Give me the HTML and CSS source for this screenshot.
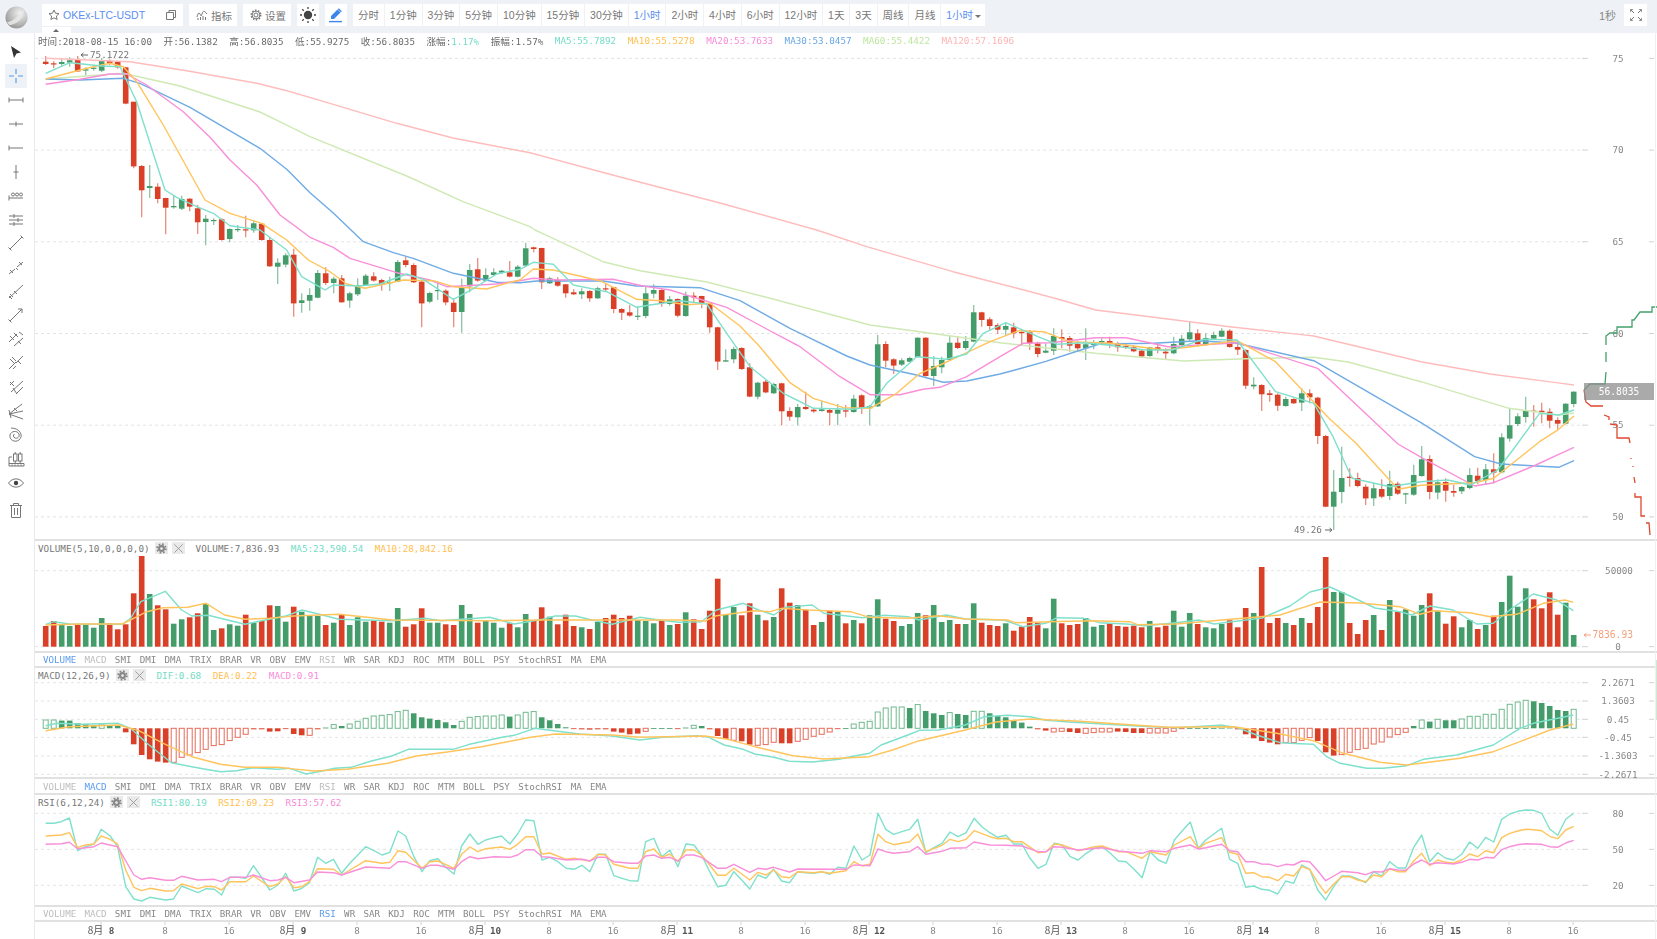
FILE: index.html
```html
<!DOCTYPE html>
<html lang="zh-CN">
<head>
<meta charset="utf-8">
<title>OKEx-LTC-USDT</title>
<link rel="stylesheet" href="styles.css">
</head>
<body>
<div class="app">
  <header class="toolbar">
    <div class="logo-slot">
      <svg class="logo" viewBox="0 0 24 24" width="23" height="23">
        <defs>
          <radialGradient id="sphere" cx="65%" cy="30%" r="80%">
            <stop offset="0" stop-color="#f1f1f1"/>
            <stop offset=".55" stop-color="#bdbdbd"/>
            <stop offset="1" stop-color="#8f8f8f"/>
          </radialGradient>
        </defs>
        <circle cx="12" cy="12" r="11.5" fill="url(#sphere)"/>
        <path d="M2 17C8 16 16 10 19 3C21 9 16 18 5 20Z" fill="#e9e9e9" opacity=".85"/>
      </svg>
    </div>
    <div class="btn symbol">
      <svg class="ico" viewBox="0 0 12 12" width="12" height="12"><path class="ln" d="M6 1l1.5 3.2 3.5.4-2.6 2.4.7 3.5L6 8.8l-3.1 1.7.7-3.5L1 4.6l3.5-.4z"/></svg>
      <span class="symbol-name">OKEx-LTC-USDT</span>
      <svg class="ico copy" viewBox="0 0 12 12" width="12" height="12"><path class="ln" d="M1.5 3.5h7v7h-7zM4 3.5V1.5h6.500v7H8.500"/></svg>
    </div>
    <div class="btn action">
      <svg class="ico" viewBox="0 0 12 12" width="12" height="12"><path class="ln" d="M1 8c1-4 2-5 3-3s1 3 2 0 2-4 5 0M2 11V9M4.500 11V8M7 11V7M9.500 11V8"/></svg>
      <span>指标</span>
    </div>
    <div class="btn action">
      <svg class="ico" viewBox="0 0 12 12" width="12" height="12"><circle class="ln" cx="6" cy="6" r="2"/><circle class="ln dash" cx="6" cy="6" r="4.800"/><circle class="ln" cx="6" cy="6" r="3.900"/></svg>
      <span>设置</span>
    </div>
    <div class="btn square">
      <svg viewBox="0 0 16 16" width="16" height="16"><circle cx="8" cy="8" r="4.200" fill="#444"/><path class="rays" d="M8 0v2M8 14v2M0 8h2M14 8h2M2.300 2.300l1.400 1.400M12.300 12.300l1.400 1.400M2.300 13.700l1.400-1.400M12.300 3.700l1.400-1.400"/></svg>
    </div>
    <div class="btn square">
      <svg viewBox="0 0 16 16" width="16" height="16"><path d="M9.500 2.500l3 3L6 12H3V9z" fill="#3f86ea"/><path d="M10.800 1.200l3 3-1 1-3-3z" fill="#3f86ea"/><path d="M1 14.600h13" stroke="#3f86ea" stroke-width="1.400"/></svg>
    </div>
    <nav class="periods">
      <span class="period">分时</span>
      <span class="period">1分钟</span>
      <span class="period">3分钟</span>
      <span class="period">5分钟</span>
      <span class="period">10分钟</span>
      <span class="period">15分钟</span>
      <span class="period">30分钟</span>
      <span class="period active">1小时</span>
      <span class="period">2小时</span>
      <span class="period">4小时</span>
      <span class="period">6小时</span>
      <span class="period">12小时</span>
      <span class="period">1天</span>
      <span class="period">3天</span>
      <span class="period">周线</span>
      <span class="period">月线</span>
      <span class="period active more">1小时<i class="caret"></i></span>
    </nav>
    <div class="toolbar-right">
      <span class="refresh">1秒</span>
      <div class="btn full">
        <svg viewBox="0 0 14 14" width="14" height="14"><path class="full-ico" d="M1 1h3.500L1 4.500zM13 1H9.500L13 4.500zM1 13h3.500L1 9.500zM13 13H9.500L13 9.500z"/><path class="ln" d="M2 2l3 3M12 2L9 5M2 12l3-3M12 12L9 9"/></svg>
      </div>
    </div>
    <div class="collapse"></div>
  </header>

  <div class="workspace">
    <aside class="tools">
      <div class="tool"><svg viewBox="0 0 22 22"><path d="M6 5l10 6.500-4.500 1L9 17z" fill="#333"/></svg></div>
      <div class="tool selected"><svg viewBox="0 0 22 22"><path class="blue" d="M4 11h5M13 11h5M11 4v5M11 13v5"/></svg></div>
      <div class="tool"><svg viewBox="0 0 22 22"><path class="ln" d="M4 11h14M4 8.500v5M18 8.500v5"/></svg></div>
      <div class="tool"><svg viewBox="0 0 22 22"><path class="ln" d="M4 11h14M11 8.500v5"/></svg></div>
      <div class="tool"><svg viewBox="0 0 22 22"><path class="ln" d="M4 11h14M4 8.500v5"/></svg></div>
      <div class="tool"><svg viewBox="0 0 22 22"><path class="ln" d="M11 4v14M8.500 11h5"/></svg></div>
      <div class="tool"><svg viewBox="0 0 22 22"><path class="ln" d="M4 13h14M4 10.500v5"/><circle class="ln" cx="8" cy="9.500" r="1.500"/><circle class="ln" cx="12" cy="9.500" r="1.500"/><circle class="ln" cx="16" cy="9.500" r="1.500"/></svg></div>
      <div class="tool"><svg viewBox="0 0 22 22"><path class="ln" d="M4 7h14M4 11h14M4 15h14M9 5v4M13 9v4M9 13v4"/></svg></div>
      <div class="tool"><svg viewBox="0 0 22 22"><path class="ln" d="M5 17L17 5M3.500 15.500l3 3M15.500 3.500l3 3"/></svg></div>
      <div class="tool"><svg viewBox="0 0 22 22"><path class="ln" d="M4 18l6-5M12 11l6-5M5 14l3 3M14 6l3 3M11 12l2 2"/></svg></div>
      <div class="tool"><svg viewBox="0 0 22 22"><path class="ln" d="M4 18L18 5M5 14l3 3M9 11l3 3M4 16l3 3"/></svg></div>
      <div class="tool"><svg viewBox="0 0 22 22"><path class="ln" d="M5 17L17 5M13 5h4v4M3.500 15.500l3 3"/></svg></div>
      <div class="tool"><svg viewBox="0 0 22 22"><path class="ln" d="M4 14l8-8M9 18l9-8M14 4l4 3M5 8l4 4M9 5l4 4M13 13l3 3"/></svg></div>
      <div class="tool"><svg viewBox="0 0 22 22"><path class="ln" d="M4 17l7-7M11 11l7-7M5 7l4 4M7 5l4 4M11 14l-3 3M13 9l3 3"/></svg></div>
      <div class="tool"><svg viewBox="0 0 22 22"><path class="ln" d="M5 9l4-4M9 10l-4-4M6 16l12-11M8 12l4 6M11 18l7-7"/></svg></div>
      <div class="tool"><svg viewBox="0 0 22 22"><path class="ln" d="M4 14L17 4M4 14l14-3M4 14l14 5M9 8l3 3M4 10l2 8"/></svg></div>
      <div class="tool"><svg viewBox="0 0 22 22"><path class="ln" d="M6 4c9 0 13 8 8 12-4 3-10 0-9-5 1-4 7-5 9-1 1 3-2 5-4 4-2-1-2-3-.5-4"/></svg></div>
      <div class="tool"><svg viewBox="0 0 22 22"><path class="ln" d="M4 18V9h3M4 18h15v-2.500H4M7 18v-1.500M10 18v-1.500M13 18v-1.500M16 18v-1.500"/><rect class="ln" x="8.500" y="6" width="3.500" height="7"/><rect class="ln" x="13.500" y="6" width="3.500" height="7"/><path class="ln" d="M10.200 4v2M15.200 4v2M10.200 13v2.500M15.200 13v2.500"/></svg></div>
      <div class="tool"><svg viewBox="0 0 22 22"><path class="ln" d="M3.500 11c4-5.500 11-5.500 15 0-4 5.500-11 5.500-15 0z"/><circle cx="11" cy="11" r="2.200" fill="#444"/></svg></div>
      <div class="tool last"><svg viewBox="0 0 22 22"><path class="ln" d="M5 6.500h12M8.500 6.500V4.500h5v2M6.500 6.500V18.500h9V6.500M9.500 9v7M12.500 9v7"/></svg></div>
    </aside>

    <main class="charts">
      <section class="pane pane-main">
        <div class="info">
          <span><b class="cjk">时间</b>:2018-08-15 16:00</span>
          <span><b class="cjk">开</b>:56.1382</span>
          <span><b class="cjk">高</b>:56.8035</span>
          <span><b class="cjk">低</b>:55.9275</span>
          <span><b class="cjk">收</b>:56.8035</span>
          <span><b class="cjk">涨幅</b>:<em class="c-ma5">1.17%</em></span>
          <span><b class="cjk">振幅</b>:1.57%</span>
          <span class="c-ma5">MA5:55.7892</span>
          <span class="c-ma10">MA10:55.5278</span>
          <span class="c-ma20">MA20:53.7633</span>
          <span class="c-ma30">MA30:53.0457</span>
          <span class="c-ma60">MA60:55.4422</span>
          <span class="c-ma120">MA120:57.1696</span>
        </div>
        <svg id="chart-main" class="plot" viewBox="35 33 1622 506"></svg>
      </section>

      <section class="pane pane-vol">
        <div class="sub-title">
          <span class="sub-name">VOLUME(5,10,0,0,0,0)</span>
          <span class="mini"><svg viewBox="0 0 12 12"><circle class="gear-teeth" cx="6" cy="6" r="4.800"/><circle class="gear" cx="6" cy="6" r="3.800"/><circle class="gear-hole" cx="6" cy="6" r="1.500"/></svg></span>
          <span class="mini"><svg viewBox="0 0 12 12"><path class="x" d="M1.500 1.500l9 9M10.500 1.500l-9 9"/></svg></span>
          <span class="sub-val">VOLUME:7,836.93</span>
          <span class="sub-val c-ma5">MA5:23,590.54</span>
          <span class="sub-val c-ma10">MA10:28,842.16</span>
        </div>
        <svg id="chart-vol" class="plot" viewBox="35 541 1622 110"></svg>
      </section>
      <nav class="tabs tabs-13">
        <span class="on">VOLUME</span><span class="dim">MACD</span><span>SMI</span><span>DMI</span><span>DMA</span><span>TRIX</span><span>BRAR</span><span>VR</span><span>OBV</span><span>EMV</span><span class="dim">RSI</span><span>WR</span><span>SAR</span><span>KDJ</span><span>ROC</span><span>MTM</span><span>BOLL</span><span>PSY</span><span>StochRSI</span><span>MA</span><span>EMA</span>
      </nav>

      <section class="pane pane-macd">
        <div class="sub-title">
          <span class="sub-name">MACD(12,26,9)</span>
          <span class="mini"><svg viewBox="0 0 12 12"><circle class="gear-teeth" cx="6" cy="6" r="4.800"/><circle class="gear" cx="6" cy="6" r="3.800"/><circle class="gear-hole" cx="6" cy="6" r="1.500"/></svg></span>
          <span class="mini"><svg viewBox="0 0 12 12"><path class="x" d="M1.500 1.500l9 9M10.500 1.500l-9 9"/></svg></span>
          <span class="sub-val c-ma5">DIF:0.68</span>
          <span class="sub-val c-ma10">DEA:0.22</span>
          <span class="sub-val c-ma20">MACD:0.91</span>
        </div>
        <svg id="chart-macd" class="plot" viewBox="35 668 1622 109"></svg>
      </section>
      <nav class="tabs tabs-14">
        <span class="dim">VOLUME</span><span class="on">MACD</span><span>SMI</span><span>DMI</span><span>DMA</span><span>TRIX</span><span>BRAR</span><span>VR</span><span>OBV</span><span>EMV</span><span class="dim">RSI</span><span>WR</span><span>SAR</span><span>KDJ</span><span>ROC</span><span>MTM</span><span>BOLL</span><span>PSY</span><span>StochRSI</span><span>MA</span><span>EMA</span>
      </nav>

      <section class="pane pane-rsi">
        <div class="sub-title">
          <span class="sub-name">RSI(6,12,24)</span>
          <span class="mini"><svg viewBox="0 0 12 12"><circle class="gear-teeth" cx="6" cy="6" r="4.800"/><circle class="gear" cx="6" cy="6" r="3.800"/><circle class="gear-hole" cx="6" cy="6" r="1.500"/></svg></span>
          <span class="mini"><svg viewBox="0 0 12 12"><path class="x" d="M1.500 1.500l9 9M10.500 1.500l-9 9"/></svg></span>
          <span class="sub-val c-ma5">RSI1:80.19</span>
          <span class="sub-val c-ma10">RSI2:69.23</span>
          <span class="sub-val c-ma20">RSI3:57.62</span>
        </div>
        <svg id="chart-rsi" class="plot" viewBox="35 795 1622 110"></svg>
      </section>
      <nav class="tabs tabs-13">
        <span class="dim">VOLUME</span><span class="dim">MACD</span><span>SMI</span><span>DMI</span><span>DMA</span><span>TRIX</span><span>BRAR</span><span>VR</span><span>OBV</span><span>EMV</span><span class="on">RSI</span><span>WR</span><span>SAR</span><span>KDJ</span><span>ROC</span><span>MTM</span><span>BOLL</span><span>PSY</span><span>StochRSI</span><span>MA</span><span>EMA</span>
      </nav>

      <svg id="chart-time" class="time-axis" viewBox="35 922 1622 17"></svg>
      <div class="scroll-thumb"></div>
    </main>
  </div>
</div>
<script src="chart.js"></script>
</body>
</html>
```
FILE: styles.css
```css
* { box-sizing: border-box; }
html, body { margin: 0; height: 100%; background: #fff; overflow: hidden; }
body { font-family: "Liberation Sans", "Noto Sans CJK SC", sans-serif; color: #777; }
.app { width: 1657px; height: 939px; display: flex; flex-direction: column; filter: blur(.35px); }

/* top bar */
.toolbar { position: relative; height: 33px; flex: none; display: flex; align-items: center; gap: 6px; background: #eef1f5; font-size: 10.500px; padding: 0 10px 3px 0; }
.logo-slot { width: 36px; height: 33px; display: flex; align-items: center; padding: 2px 0 0 5px; flex: none; align-self: flex-start; }
.logo { display: block; }
.btn { height: 22px; background: #fff; display: flex; align-items: center; flex: none; }
.symbol { width: 141px; padding: 0 6px; gap: 3px; }
.symbol-name { color: #5b8ff0; font-size: 10.500px; }
.copy { margin-left: auto; }
.action { width: 48px; gap: 3px; padding-left: 7px; }
.square { width: 22px; justify-content: center; }
.ico { flex: none; }
.ln { fill: none; stroke: #777; stroke-width: 1; }
.ln.dash { stroke-dasharray: 1.500 1.500; stroke-width: 1.400; }
.rays { stroke: #444; stroke-width: 1.300; fill: none; }
.periods { display: flex; gap: 1px; }
.period { height: 22px; line-height: 22px; padding: 0 4.950px; background: #fff; color: #777; white-space: nowrap; }
.period.active { color: #5b8ff0; }
.more { padding-right: 4px; }
.caret { display: inline-block; margin-left: 2px; vertical-align: 1px; border: 3px solid transparent; border-top-color: #777; border-bottom-width: 0; }
.toolbar-right { margin-left: auto; display: flex; align-items: center; gap: 8px; font-size: 11px; }
.refresh { color: #888; }
.full { width: 23px; justify-content: center; }
.full-ico { fill: #999; }
.collapse { position: absolute; left: 42px; top: 27px; width: 29px; height: 6px; background: #fff; }
.collapse::after { content: ""; position: absolute; left: 11px; top: 2px; border: 3px solid transparent; border-bottom-color: #666; border-top-width: 0; }

/* left tool rail */
.workspace { flex: 1; display: flex; min-height: 0; }
.tools { width: 35px; flex: none; border-right: 1px solid #e7eaee; padding: 7px 0 0 5px; display: flex; flex-direction: column; background: #fff; }
.tool { width: 22px; height: 23.950px; flex: none; display: flex; align-items: center; justify-content: center; }
.tool.last { margin-top: 3px; }
.tool svg { width: 22px; height: 22px; display: block; }
.tool.selected { background: #eef1f5; border-radius: 2px; }
.blue { fill: none; stroke: #5b9be8; stroke-width: 1.200; }

/* chart column */
.charts { position: relative; width: 1622px; flex: none; display: flex; flex-direction: column; }
.pane { position: relative; flex: none; border-bottom: 2px solid #e1e1e1; }
.pane-main { height: 508px; }
.pane-vol { height: 112px; }
.pane-macd { height: 111px; }
.pane-rsi { height: 112px; }
.plot { display: block; width: 1622px; height: 100%; overflow: visible; }
.info { position: absolute; left: 3px; top: 0; height: 15px; display: flex; align-items: center; gap: 11.500px; white-space: nowrap; font: 9.270px "DejaVu Sans Mono", monospace; color: #6a6a6a; background: #fff; z-index: 1; }
.info em { font-style: normal; }
.cjk { font: 9.600px "Noto Sans CJK SC", sans-serif; }
.c-ma5 { color: #74dcc6; }
.c-ma10 { color: #ffc04f; }
.c-ma20 { color: #f98bd8; }
.c-ma30 { color: #6aa8e4; }
.c-ma60 { color: #bfe6a0; }
.c-ma120 { color: #ffb4b4; }

.sub-title { position: absolute; left: 0; top: 0; height: 14px; padding: 0 0 0 3px; display: flex; align-items: center; white-space: nowrap; font: 9.270px "DejaVu Sans Mono", monospace; background: #fff; z-index: 1; }
.sub-name { color: #777; margin-right: 5px; }
.mini { width: 13px; height: 12px; background: #eaeaea; margin-right: 4px; display: flex; align-items: center; justify-content: center; }
.mini svg { width: 11px; height: 11px; display: block; }
.mini + .sub-val { margin-left: 7px; }
.sub-val { color: #777; margin-right: 11.500px; }
.sub-val.c-ma5 { color: #74dcc6; }
.sub-val.c-ma10 { color: #ffc04f; }
.sub-val.c-ma20 { color: #f98bd8; }
.gear { fill: #868686; }
.gear-hole { fill: #eaeaea; }
.gear-teeth { fill: none; stroke: #868686; stroke-width: 1.800; stroke-dasharray: 1.900 1.870; }
.x { stroke: #999; stroke-width: 1; fill: none; }

.tabs { flex: none; display: flex; align-items: center; gap: 8.250px; padding-left: 8px; font: 9.200px "DejaVu Sans Mono", monospace; color: #888; border-bottom: 2px solid #e1e1e1; }
.tabs-13 { height: 15px; padding-bottom: 1px; }
.tabs-14 { height: 16px; }
.tabs .on { color: #5b9bf0; }
.tabs .dim { color: #bdbdbd; }
.time-axis { display: block; width: 1622px; height: 17px; flex: none; }
.scroll-thumb { position: absolute; right: 0; top: 627px; width: 2px; height: 60px; background: #cfe9d9; }
.charts::after { content: ""; position: absolute; right: 1px; top: 0; bottom: 0; width: 1px; background: #eef0f3; }

/* svg chart marks */
.grid { stroke: #e4e4e4; stroke-width: 1; stroke-dasharray: 3 3; fill: none; }
.tick { stroke: #d2d2d2; stroke-width: 1; fill: none; }
.label { font: 9.270px "DejaVu Sans Mono", monospace; fill: #888; text-anchor: middle; }
.label-cjk { font: 10px "Noto Sans CJK SC", sans-serif; }
.date { fill: #555; font-weight: bold; }
.up { fill: #439c69; }
.down { fill: #da3f27; }
.wick-up { stroke: #439c69; stroke-width: 1.300; opacity: .6; }
.wick-down { stroke: #da3f27; stroke-width: 1.300; opacity: .6; }
.hollow-up { fill: #fff; stroke: #6fb98e; stroke-width: 1; }
.hollow-down { fill: #fff; stroke: #e66b57; stroke-width: 1; }
.line { fill: none; stroke-width: 1.400; stroke-linejoin: round; }
.l-ma5 { stroke: #7fe0cc; }
.l-ma10 { stroke: #ffc45c; }
.l-ma20 { stroke: #f98fd9; }
.l-ma30 { stroke: #6fabe4; }
.l-ma60 { stroke: #cfe9b4; }
.l-ma120 { stroke: #ffbcbc; }
.depth-red { fill: none; stroke: #e0472e; stroke-width: 1.300; }
.depth-green { fill: none; stroke: #46a06c; stroke-width: 1.300; }
.price-tag { fill: #8e8e8e; opacity: .75; }
.price-text { font: 9.600px "DejaVu Sans Mono", monospace; fill: #fff; text-anchor: middle; }
.mark { font: 9.270px "DejaVu Sans Mono", monospace; fill: #777; }
.mark-vol { font: 9.600px "DejaVu Sans Mono", monospace; fill: #f4a07c; }
.arrow-ln { fill: none; stroke: #666; stroke-width: 1; }
.arrow-vol { fill: none; stroke: #f4a07c; stroke-width: 1; }
```
FILE: chart.js
```js
// Price, volume and indicator series, read as pixel positions on each pane.
const X0 = 45.7, STEP = 8;
const xOf = i => X0 + STEP * i;

function pts(s, ox = 0, sx = 1, oy = 0, sy = 1) {
  return s.trim().split(/\s+/).map(p => {
    const [a, b] = p.split(',').map(Number);
    return [ox + a / sx, oy + b / sy];
  });
}
const Z5 = [0, 2.45, 530, 3], Z7 = [0, 2.45, 660, 3], Z12 = [640, 2.613, 550, 3], Z8 = [1200, 3, 660, 3], Z6 = [1400, 3, 370, 3];
const from = (s, z) => pts(s, z[0], z[1], z[2], z[3]);
const poly = (p, cls) => `<polyline class="line ${cls}" points="${p.map(q => q[0].toFixed(1) + ',' + q[1].toFixed(1)).join(' ')}"/>`;
function stitch(...parts) {
  // parts: [points, xmin, xmax]
  let out = [];
  parts.forEach(([p, a, b]) => { out = out.concat(p.filter(q => q[0] > a && q[0] <= b)); });
  return out;
}
function grid(ys) {
  return ys.map(y => `<path class="grid" d="M35 ${y}H1582"/><path class="tick" d="M1582 ${y}H1588M1649 ${y}H1654"/>`).join('');
}
const label = (x, y, t, c = 'label') => `<text class="${c}" x="${x}" y="${y + 3.2}">${t}</text>`;
const arrowLeft = (x, y, c = 'arrow-ln') => `<path class="${c}" d="M${x + 7} ${y}H${x}M${x + 2.5} ${y - 2}L${x} ${y}L${x + 2.5} ${y + 2}"/>`;
const arrowRight = (x, y, c = 'arrow-ln') => `<path class="${c}" d="M${x} ${y}H${x + 7}M${x + 4.5} ${y - 2}L${x + 7} ${y}L${x + 4.5} ${y + 2}"/>`;

/* ---------- candles: wick top, body top, body bottom, wick bottom ---------- */
const C1 = `R18,35,42,45 R34,40,41,55 G25,36,42,48 G22,31,38,50 R18,29,64,66 G52,58,62,76 G45,53,56,62 G25,33,62,66 R28,33,39,45 R33,36,52,56
R50,52,161,163 R155,155,349,355 R345,348,421,502 G345,408,414,444 R400,410,447,460 R443,444,473,553 G438,468,472,476 G437,447,476,480 R445,446,470,484 R465,475,517,552
G495,506,516,586 G505,510,512,525 R505,508,570,572 G535,537,567,577 G525,537,539,546 R497,538,541,562 G510,520,541,548 R519,521,570,572 R560,570,649,651 G625,638,650,702
G610,616,644,652 R596,614,760,800 G730,751,759,788 G715,735,752,782 G660,669,743,745 R652,670,699,705 G680,686,699,730 R675,685,757,758 G725,730,752,773 G685,706,733,738
G672,677,705,708 R667,679,692,695 R686,690,703,722 G680,696,700,723 G630,636,695,697 R620,631,645,652 R640,645,697,699 R692,695,760,832 G725,729,755,760 G695,720,722,750
R718,722,757,766 R745,758,786,832 G686,712,786,848 G642,660,709,727 R624,658,692,695 G655,675,692,695 G655,667,675,678 G660,662,668,672 R633,667,680,682 G645,650,680,682 G578,595,647,650`;
const C2 = `R50,52,57,67 R53,54,157,177 G140,145,160,162 R142,150,167,170 R162,163,190,203 R178,187,193,195 G175,184,193,207 R180,183,205,215 G170,175,205,207
R160,175,177,185 R170,172,237,250 R235,237,248,270 R225,247,257,260 G230,257,260,270 G170,190,258,265 G163,180,191,205 R178,180,220,230 G198,208,222,227 R205,207,257,262
G185,197,258,260 R187,197,202,218 R197,198,222,235 R218,220,292,308 R290,292,395,420 G358,391,395,396 G350,357,388,400 R352,354,417,420 R400,412,500,502 G455,458,500,508
R450,455,487,490 G458,462,490,492 R458,460,544,586 R532,543,560,572 G522,531,562,586 R485,531,537,540 R533,539,544,548 G513,538,543,545 R535,540,548,586 G522,539,551,586
R525,541,545,562 G494,506,546,548 R493,496,534,552 G525,529,535,586 G315,343,529,531 R334,342,392,412 R385,388,407,432 G385,391,404,408 G380,384,395,397 G322,323,381,383
R322,323,438,440 G378,408,438,468 G380,390,412,430 G318,338,390,392 R322,338,354,357 G318,333,354,360 G225,247,335,337 R245,247,270,290 R262,268,288,302 R280,285,299,312
G280,288,299,315 R278,292,310,325`;
const C3 = `R90,96,98,138 R90,97,130,150 R125,130,162,172 G130,152,158,160 G85,108,152,165 R88,111,117,145 R108,114,137,155 R122,132,145,155 G85,133,145,180
G120,127,135,148 G115,123,128,135 R110,123,130,145 R125,132,142,155 R130,138,144,147 R135,142,154,157 R150,152,169,173 G140,142,168,170 R130,142,150,160 R145,155,160,177
G110,132,160,163 G105,116,135,137 G64,97,118,122 R88,100,132,140 G100,114,134,138 G95,105,116,118 G85,92,110,112 R88,92,141,143 R125,141,149,165 R148,150,257,267
G232,254,259,268 R253,255,283,333 R270,280,285,305 R280,284,317,333 G290,297,318,320 R295,297,310,312 G265,280,308,333 R268,280,292,310 R290,293,408,432 R405,408,620,622
G510,575,620,690 G440,534,576,610 R505,530,534,560 R518,534,558,562 R553,560,595,615 G550,565,595,618 R538,567,590,595 G512,552,588,600 R545,551,581,585 G578,580,582,612
G494,525,584,587 G438,478,528,530 R466,477,576,598 G538,547,578,598 R535,546,572,605 R555,573,578,590 G558,561,574,582 G505,525,564,568 R503,527,543,552 G492,508,540,555
R460,508,518,550 G400,412,517,520 G325,376,416,425 G340,349,372,378 G290,332,351,368 R315,332,334,380 R308,332,338,370 R325,335,362,385 R352,360,371,388 G310,311,371,373 G274,275,312,322`;
function parseCandles(s, off) {
  return s.trim().split(/\s+/).map(t => {
    const up = t[0] === 'G';
    const [wt, bt, bb, wb] = t.slice(1).split(',').map(n => off + Number(n) / 3);
    return { up, wt, bt, bb, wb };
  });
}
const candles = parseCandles(C1, 50).concat(parseCandles(C2, 230), parseCandles(C3, 300));

/* ---------- moving averages on the price pane ---------- */
const MA = {
  'l-ma120': '45.7,58.3 130,61.7 186.7,70.7 256.7,83.3 286.7,90.7 330,103.3 396.7,123.3 453,138 530,152.7 620,177 720,203 816.7,230 866.7,246.7 953,271.7 1020,289 1061,300 1095.7,310 1229.6,326.7 1313.8,336 1421,361.7 1490,374 1574,385',
  'l-ma60': '45.7,79 123.3,73.3 180,86 260,112 310,136.7 406.7,176 463,201.7 530,226.7 535,230 603,261.7 640,270.7 706.7,282 773,299 870,325 920,331.7 1000,342.7 1095.7,353.3 1183.7,361 1260,358.3 1313.8,357.3 1348,362 1421,381.7 1509,408.3 1558.7,415 1574,413',
  'l-ma30': '45.7,79 80,80 123.3,78.3 140,83.3 190,107.3 260,148.3 286.7,169.3 310,192.7 333,212.7 363.3,241.7 393.3,252.7 413.3,258.3 453.3,273.3 496.7,282.3 520,282.7 536.7,281 603,281 636.7,286 700,287.7 740,300.7 790,328.3 846.7,356 870,365 913.3,374.3 943.3,382.3 966.7,381 1000,374 1015,370 1046,361.3 1099.5,344 1153,343.3 1199,340.7 1237,343.3 1313.8,360.7 1421,422.7 1474.6,456.7 1501,464 1558.7,467.3 1574,460.7',
  'l-ma20': '45.7,84.3 80,79.3 110,74 126.7,74 146.7,85 183.3,111.7 210,137.3 230,160 256.7,185 280,215 310,237.3 333.3,247.3 350,258.3 396.7,272.7 430,280 446.7,286.7 496.7,284 520,280.7 533,278.3 560,280 613,279.3 643,286 670,290 726.7,307.3 766.7,329 800,346.7 840,376.7 870,394.7 900,394.7 923,389.3 940,387.3 966.7,376.7 1000,356.7 1023,343.3 1050,342.7 1095.7,337.7 1126,337.7 1168,346.7 1199,345 1237,342.7 1317.6,368.3 1398,444 1423,458.3 1474.6,486 1493.7,482.7 1535.8,465 1574,447.3',
  'l-ma10': '45.7,79 73.3,71.7 93.3,66.7 110,63.3 123.3,66.7 136.7,81.7 163.3,125 205,200 230,213.3 261.7,223.3 286.7,240 308.3,260 330,271.7 346.7,284 365,288.3 403.3,280 433.3,280.7 453.3,286.7 486.7,289 510,282.3 520,280 533.3,269 553.3,270 600,280.7 636.7,299.3 660,300.7 686.7,304.7 710,303.3 740,326 758.3,345 790,382.7 813.3,398.3 843.3,407.7 870,408.3 896.7,393.3 920,373.3 940,365 956.7,357.3 990,341.7 1019,330.7 1044,331.7 1069,341.7 1111,343.3 1164.6,350 1191,346.7 1237,340.7 1275.5,361.7 1329,418.3 1356,443.3 1398,489.3 1421,485.3 1474.6,482.7 1493.7,478.3 1539.6,441.7 1558.7,429.3 1574,416',
  'l-ma5': '45.7,73.3 70,62.7 101.7,66 120,66.7 136.7,101.7 165,190 176.7,197.3 196.7,206.7 213.3,213.3 230,225.7 260,230 286.7,250 301.7,276.7 325,290 333.3,285 358.3,286 380,284 406.7,274 423.3,279.3 453.3,299.3 470,290.7 496.7,274 520,269.3 533.3,262.3 553.3,264.3 573.3,285 606.7,291.7 636.7,307.3 650,305 680,300.7 706.7,304 726.7,333.3 750,366.7 783.3,393.3 813.3,408.3 853.3,409.3 870,406.7 886.7,383.3 900,371.7 916.7,356.7 946.7,359.3 966.7,354 983.3,333.3 1005.7,322.7 1038,336.7 1057.4,344.3 1084,342.7 1107,345 1145.4,350 1172,350 1203,339.3 1237,340 1275.5,391.7 1313.8,403.3 1333,436.7 1352,478.3 1390,486.7 1421,481.7 1447.8,480 1470.7,485 1497.5,470 1512.8,450 1539.6,413.3 1558.7,415 1574,410'
};

/* ---------- price pane ---------- */
(function () {
  const ys = [58.4, 150.1, 241.8, 333.5, 425.2, 516.9];
  let h = grid(ys);
  ['75', '70', '65', '60', '55', '50'].forEach((t, i) => { h += label(1618, ys[i], t); });
  candles.forEach((c, i) => {
    const x = xOf(i);
    h += `<path class="${c.up ? 'wick-up' : 'wick-down'}" d="M${x} ${c.wt.toFixed(1)}V${c.wb.toFixed(1)}"/>`;
    h += `<rect class="${c.up ? 'up' : 'down'}" x="${x - 2.8}" y="${c.bt.toFixed(1)}" width="5.600" height="${Math.max(1.2, c.bb - c.bt).toFixed(1)}"/>`;
  });
  Object.keys(MA).forEach(k => { h += poly(pts(MA[k]), k); });
  h += arrowLeft(81, 55) + `<text class="mark" x="90" y="58.200">75.1722</text>`;
  h += `<text class="mark" x="1294" y="533.200">49.26</text>` + arrowRight(1325, 530);
  // market depth steps on the price axis
  h += `<path class="depth-red" d="M1584 390L1586 402L1591 406H1603M1604 415L1609 417V420M1610 424L1617 425V438H1629L1630 443M1631 458V459M1633 466V467M1634 477L1635 483M1635 493V497H1641V516H1645M1646 523H1649L1650 535"/>`;
  h += `<path class="depth-green" d="M1584 390L1590 384H1605L1606 372M1606 362V352M1606 345V336L1610 333H1617V327H1632V320H1634L1640 312H1652V307H1657"/>`;
  h += `<rect class="price-tag" x="1584" y="383" width="70" height="17"/><text class="price-text" x="1619" y="395">56.8035</text>`;
  document.getElementById('chart-main').innerHTML = h;
})();

/* ---------- volume pane ---------- */
(function () {
  const BASE = 646.7;
  const tops = [];
  const add = (s, off, div = 3) => s.trim().split(/\s+/).forEach(n => tops.push(off + Number(n) / div));
  add(`288 273 285 288 284 283 293 264 280 298 283 190 78 192 226 238 281 268 262 250 222 300 295 283 287 254 278 273 226 228 275 230 245 255 258 285 278 255 285 262 275
  272 275 278 234 290 283 235 278 278 283 285 225 252 278 273 278 293 280 292 252 270 232 260 283 254 288 292 297 276 264 254 264 257 270`, 530);
  add(`213 220 210 225 222 187 208 237 182 86 192 171 196 160 194 211 201 115 158 165 179 225 216 182 186 220 210 220 196 148
  206 213 228 222 189 196 165 216 210 222 222 160 218 225 228 220 242 230 201 218 235 146 220 225 222 204 230 225 220 228
  230 227 232 213 232 227 182 230 189 222 232 235 222 211 232`, 550);
  add(`608 613 567 623 618 623 625 618 623 607 557 592 592 623 634 620 615 630 600 612`, 0, 1);
  add(`718 737 705 670 722 761 739 772 750 777 765 737 696 617 710 655 688 715 667 734 698 795`, 370);
  let h = grid([570.7, 646.7]);
  h += label(1619, 570.7, '50000') + label(1618, 646.7, '0');
  tops.forEach((y, i) => {
    h += `<rect class="${candles[i].up ? 'up' : 'down'}" x="${xOf(i) - 2.8}" y="${y.toFixed(1)}" width="5.600" height="${(BASE - y).toFixed(1)}"/>`;
  });
  const ma5 = stitch(
    [from('112,283 132,275 170,282 300,283 320,265 345,215 405,184 445,240 470,258 510,256 600,283 650,270 700,258 740,240 790,255 830,268 960,272 1040,265 1080,272 1200,262 1260,282 1330,268 1360,258 1410,258 1450,270 1500,283 1568,262', Z5), 0, 640],
    [from('0,202 50,210 100,217 160,215 200,180 270,160 310,180 350,195 380,172 450,165 480,190 580,203 640,196 700,200 730,210 800,195 850,207 950,210 1000,230 1060,220 1090,203 1160,205 1200,218 1270,222 1320,227 1400,218 1460,210 1500,222 1568,225', Z12), 640, 1240],
    [pts('1262,618 1290,606 1310,592 1330,587 1350,596 1375,608'), 1240, 1400],
    [from('0,725 35,735 90,708 160,720 230,762 280,760 340,712 400,672 470,690 520,722', Z6), 1399, 1580]);
  const ma10 = stitch(
    [from('112,285 200,282 300,282 360,245 400,233 460,232 505,220 550,255 600,268 660,265 720,258 830,253 900,262 960,270 1200,272 1340,270 1568,270', Z5), 0, 640],
    [from('0,212 100,210 170,213 200,197 300,182 340,185 370,175 440,180 550,185 600,202 700,205 780,197 850,207 960,210 980,218 1180,212 1280,215 1300,224 1400,222 1568,218', Z12), 640, 1240],
    [pts('1280,615 1320,602 1360,603'), 1240, 1400],
    [from('0,710 60,733 100,722 210,728 270,740 350,733 430,700 495,690 520,697', Z6), 1399, 1580]);
  h += poly(ma5, 'l-ma5') + poly(ma10, 'l-ma10');
  h += arrowLeft(1584, 635, 'arrow-vol') + `<text class="mark-vol" x="1592.500" y="638.300">7836.93</text>`;
  document.getElementById('chart-vol').innerHTML = h;
})();

/* ---------- MACD pane ---------- */
(function () {
  const ZERO = 728.3;
  const bars = `25h 25h 23 23 15 13 9 13h 8 8 -12 -48 -80 -93 -100 -103 -102h -87h -80h -73h -63h -52h -49h -37h -27h -18h -3 -3 -10 -9 -2 -17 -21 -21h -3 2h 11h 7 13h 21h 30h 37h 39h 41h 50h 54h 45 33 29 25 18 10 21h 33h 35h 37h 37h 40h 35 40h 48h 50h 33 24 13 3 -2 -3 -4 -3 -3 -10 -13 -18 -16
  -9h 1 1 1 -2 2 9h 7 -3 -23 -32 -36h -39 -49 -51h -49h -42h -45 -45 -39h -33h -24h -18h -11h -2 1 13h 18h 21h 49h 61h 64h 64h 61 71h 52 45 40 47h 43 40 51h 51h 45 37 33 25 17 5 -3 -7 -11h -9h -11 -14 -15h -13h -11h -11h -10 -11 -14 -14 -14h -14h -14h -9h -2 1 1 1 1 9h 2 -3
  -18 -30 -38 -43 -48 -43h -43h -36h -28h -38 -72 -82 -79h -72h -64h -60h -47h -41h -26h -19h -12h 7 25h 20 27h 24 24 28h 36h 36h 42h 42h 57h 72h 79h 84h 81 76 67 55 52 57h`;
  const ys = [682.7, 701, 719.3, 737.3, 756, 774.3];
  const names = ['2.2671', '1.3603', '0.45', '-0.45', '-1.3603', '-2.2671'];
  let h = grid(ys);
  ys.forEach((y, i) => { h += label(1618, y, names[i]); });
  bars.trim().split(/\s+/).forEach((t, i) => {
    const hollow = t.endsWith('h');
    const v = parseFloat(t) / 3;
    const up = v > 0;
    const top = up ? ZERO - v : ZERO;
    const ht = Math.abs(v);
    if (hollow && ht > 1) {
      h += `<rect class="${up ? 'hollow-up' : 'hollow-down'}" x="${xOf(i) - 2.5}" y="${top.toFixed(1)}" width="5" height="${ht.toFixed(1)}"/>`;
    } else {
      h += `<rect class="${up ? 'up' : 'down'}" x="${xOf(i) - 2.8}" y="${top.toFixed(1)}" width="5.600" height="${Math.max(.8, ht).toFixed(1)}"/>`;
    }
  });
  const dif = stitch(
    [from('112,197 140,190 200,193 290,190 320,205 360,250 420,308 470,320 500,327 540,335 580,332 620,323 680,328 710,325 750,342 790,333 820,325 860,322 910,303 960,288 1000,268 1060,268 1110,268 1150,253 1230,232 1260,226 1310,205 1420,222 1500,228 1568,240', Z7), 0, 640],
    [from('0,568 60,562 150,557 180,562 220,585 270,598 300,612 350,622 390,634 450,636 520,628 560,618 600,610 630,585 700,555 730,541 780,540 850,525 900,500 960,496 1020,500 1060,511 1120,516 1300,528 1400,533 1520,526 1568,530', Z12), 640, 1200],
    [from('0,202 60,196 110,202 170,225 240,248 340,253 380,290 420,310 500,325 550,325 620,317 670,298 770,285 880,255 960,205 1000,190 1120,165', Z8), 1200, 1580]);
  const dea = stitch(
    [from('112,212 170,200 290,195 340,212 400,250 470,290 540,313 600,322 680,322 770,333 850,328 950,310 1020,288 1100,275 1180,260 1300,232 1360,222 1500,225 1568,232', Z7), 0, 640],
    [from('0,562 170,558 230,568 300,590 400,617 480,627 600,620 660,600 730,572 850,540 930,516 1020,507 1150,514 1280,524 1380,532 1500,530 1568,529', Z12), 640, 1200],
    [from('0,200 100,200 230,220 340,242 430,280 540,307 620,315 780,295 880,275 960,245 1050,210 1120,192', Z8), 1200, 1580]);
  h += poly(dif, 'l-ma5') + poly(dea, 'l-ma10');
  document.getElementById('chart-macd').innerHTML = h;
})();

/* ---------- RSI pane ---------- */
(function () {
  const ys = [813.3, 849.3, 885.3];
  let h = grid(ys);
  ['80', '50', '20'].forEach((t, i) => { h += label(1618, ys[i], t); });
  const r1 = stitch(
    [from('112,490 132,490 150,485 170,474 190,572 210,560 230,552 248,508 270,528 288,560 308,680 328,717 347,723 367,712 388,716 406,720 425,717 445,678 465,688 485,698 505,686 525,688 543,705 563,652 583,652 602,655 621,617 641,652 661,690 681,675 700,640 720,693 740,685 758,668 778,592 798,610 817,598 837,640 857,610 876,586 896,560 916,572 936,585 955,577 975,513 994,528 1014,590 1034,635 1053,602 1073,596 1092,622 1112,642 1131,558 1151,522 1171,553 1190,540 1210,533 1229,528 1249,552 1268,522 1288,480 1308,482 1328,600 1347,592 1367,605 1387,625 1406,628 1426,616 1445,635 1465,583 1484,583 1504,647 1524,655 1543,662 1563,663', Z7), 0, 640],
    [from('15,875 36,865 57,920 78,900 99,950 120,882 141,885 161,915 182,965 203,1010 224,1006 245,965 266,990 287,1017 308,975 329,985 349,958 370,993 391,998 412,965 433,968 454,970 475,965 496,973 517,952 538,955 559,888 580,930 601,915 622,790 642,838 663,853 684,845 705,838 726,808 747,908 768,893 789,880 810,846 831,860 852,848 873,805 893,830 914,848 935,862 956,856 977,882 998,882 1019,925 1040,955 1061,943 1082,880 1103,885 1124,920 1145,930 1166,910 1187,895 1208,890 1229,910 1250,933 1270,935 1291,958 1312,983 1333,905 1354,930 1375,940 1396,870 1417,842 1438,816 1459,895', Z12), 640, 1199],
    [from('17,540 65,505 89,598 113,610 137,682 161,678 185,688 209,691 233,702 257,663 281,670 305,615 329,628 353,690 377,720 401,680 425,648 449,648 473,657 497,668 521,635 545,648 569,605 593,624 617,624 641,562 665,525 689,605 713,578 737,595 761,600 785,583 809,546 833,565 857,532 881,546 905,478 929,462 953,454 977,450 1001,451 1025,460 1049,507 1073,526 1097,478 1121,460', Z8), 1199, 1580]);
  const r2 = stitch(
    [from('112,528 150,525 170,518 190,562 210,555 230,552 248,528 270,538 288,552 308,630 328,682 347,692 367,685 406,693 425,692 445,672 485,686 505,679 525,680 543,690 563,665 602,665 621,648 661,680 681,672 700,650 720,683 740,680 758,665 778,626 817,628 837,645 896,602 936,610 955,607 975,572 994,577 1034,625 1053,605 1073,603 1112,625 1131,583 1151,561 1171,575 1190,566 1229,561 1249,568 1268,553 1288,530 1308,530 1328,582 1347,579 1387,598 1406,595 1445,603 1465,583 1484,585 1504,613 1543,625 1563,625', Z7), 0, 640],
    [from('15,905 36,897 57,922 78,912 99,935 120,900 141,900 161,915 182,945 203,976 224,976 245,955 266,972 287,990 308,967 329,975 349,960 370,980 391,983 412,965 454,968 475,965 496,970 538,962 559,935 580,948 601,943 622,853 642,875 663,884 705,875 726,852 747,905 789,886 810,868 831,875 852,868 873,842 914,860 935,866 956,865 977,875 998,875 1040,908 1061,905 1082,882 1103,885 1145,902 1187,890 1208,888 1250,905 1270,905 1312,925 1333,905 1375,915 1396,885 1438,860 1459,895', Z12), 640, 1199],
    [from('17,550 65,533 89,577 113,583 137,640 161,638 185,650 209,652 233,662 257,643 281,648 305,620 329,628 353,668 377,700 401,672 425,650 449,650 473,660 497,665 521,645 545,650 569,627 593,635 617,635 641,603 665,580 689,617 713,600 737,607 761,609 785,600 809,582 833,590 857,572 881,578 905,533 929,520 953,513 977,508 1001,509 1025,512 1049,529 1073,536 1097,510 1121,499', Z8), 1199, 1580]);
  const r3 = stitch(
    [from('112,553 150,551 170,547 190,566 230,560 248,549 288,560 328,645 347,658 367,653 406,661 425,661 445,649 485,660 525,658 543,665 563,652 602,652 621,645 661,662 681,660 700,652 720,668 758,660 778,636 817,638 837,645 896,621 955,625 975,605 994,605 1034,625 1053,616 1073,616 1112,628 1131,605 1151,590 1171,596 1210,590 1249,592 1268,585 1288,569 1308,569 1328,590 1347,592 1387,600 1426,598 1445,603 1465,592 1484,592 1504,605 1543,610 1563,610', Z7), 0, 640],
    [from('15,918 36,915 57,925 78,922 99,933 120,915 141,915 161,922 203,955 224,955 245,943 287,967 308,955 329,958 349,952 391,966 412,957 517,958 538,958 559,945 601,947 622,897 642,905 663,910 705,905 726,890 747,913 789,904 810,895 852,893 873,876 914,885 956,886 998,888 1040,905 1061,905 1082,890 1103,892 1145,900 1208,893 1250,903 1312,910 1333,902 1375,905 1396,895 1438,885 1459,897', Z12), 640, 1199],
    [from('17,563 65,553 89,572 113,575 137,605 161,605 185,612 209,613 233,620 257,613 281,615 305,603 329,605 353,632 377,662 401,648 425,634 473,638 497,644 521,635 545,636 569,626 593,630 617,631 641,612 665,600 689,613 713,608 761,612 785,607 809,598 833,600 857,592 881,594 905,569 929,560 953,554 977,551 1025,553 1049,560 1073,562 1097,549 1121,541', Z8), 1199, 1580]);
  h += poly(r1, 'l-ma5') + poly(r2, 'l-ma10') + poly(r3, 'l-ma20');
  document.getElementById('chart-rsi').innerHTML = h;
})();

/* ---------- time axis ---------- */
(function () {
  let h = '';
  for (let k = 0; k < 24; k++) {
    const x = 101 + 64 * k;
    h += `<path class="tick" d="M${x} 922V925"/>`;
    if (k % 3 === 0) {
      const day = 8 + k / 3;
      h += `<text class="label date" x="${x}" y="934"><tspan class="label-cjk">8月</tspan> ${day}</text>`;
    } else {
      h += `<text class="label" x="${x}" y="934">${k % 3 === 1 ? 8 : 16}</text>`;
    }
  }
  document.getElementById('chart-time').innerHTML = h;
})();
```
